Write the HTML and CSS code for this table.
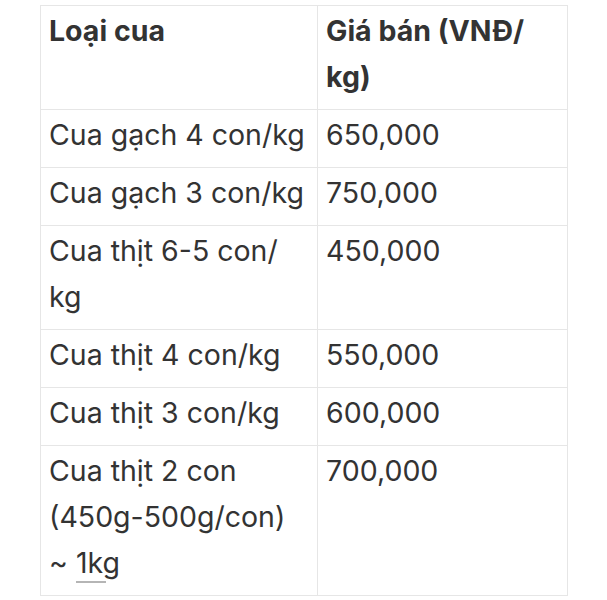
FILE: index.html
```html
<!DOCTYPE html>
<html lang="vi">
<head>
<meta charset="utf-8">
<link rel="stylesheet" href="styles.css">
</head>
<body>
<div class="wrap">
<table class="price">
  <colgroup><col class="c1"><col class="c2"></colgroup>
  <thead>
    <tr><th>Loại cua</th><th>Giá bán (VNĐ/ kg)</th></tr>
  </thead>
  <tbody>
    <tr><td>Cua gạch 4 con/kg</td><td>650,000</td></tr>
    <tr><td>Cua gạch 3 con/kg</td><td>750,000</td></tr>
    <tr><td>Cua thịt 6-5 con/ kg</td><td>450,000</td></tr>
    <tr><td>Cua thịt 4 con/kg</td><td>550,000</td></tr>
    <tr><td>Cua thịt 3 con/kg</td><td>600,000</td></tr>
    <tr><td>Cua thịt 2 con (450g-500g/con) ~&nbsp;<span class="ul">1kg</span></td><td>700,000</td></tr>
  </tbody>
</table>
</div>
</body>
</html>
```
FILE: styles.css
```css
html, body { margin: 0; padding: 0; background: #fff; }
.wrap { padding: 5px 40px; }
.price {
  width: 527px;
  border-collapse: collapse;
  table-layout: fixed;
  font-family: "Inter", "Noto Sans", sans-serif;
  font-size: 28.5px;
  line-height: 46px;
  color: #333;
}
.c1 { width: 277px; }
.c2 { width: 250px; }
.price th, .price td {
  border: 1px solid #e6e6e6;
  padding: 2px 8px 9px 8px;
  text-align: left;
  vertical-align: top;
  font-weight: 400;
}
.price th { font-weight: 700; }
.ul {
  display: inline-block;
  line-height: 40px;
  background-image: linear-gradient(#b5b5b5, #b5b5b5);
  background-repeat: no-repeat;
  background-size: 30px 2px;
  background-position: 0 100%;
}
```
